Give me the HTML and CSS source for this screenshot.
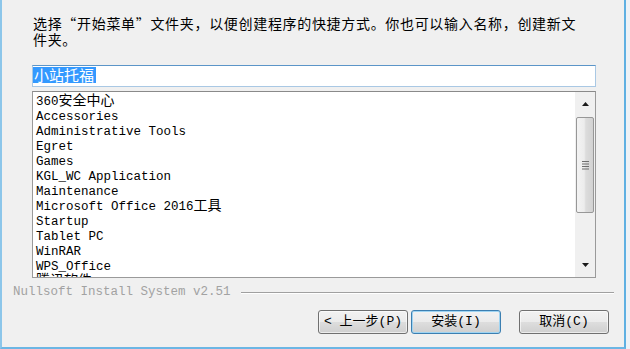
FILE: index.html
```html
<!DOCTYPE html>
<html lang="zh-CN">
<head>
<meta charset="utf-8">
<link rel="stylesheet" href="styles.css">
</head>
<body>
<div class="window">
  <div class="page">
    <p class="intro">选择“开始菜单”文件夹，以便创建程序的快捷方式。你也可以输入名称，创建新文件夹。</p>
    <div class="input"><span class="sel">小站托福</span></div>
    <div class="listbox">
      <div class="items">
        <div class="row">360<span class="cjk">安全中心</span></div>
        <div class="row">Accessories</div>
        <div class="row">Administrative Tools</div>
        <div class="row">Egret</div>
        <div class="row">Games</div>
        <div class="row">KGL_WC Application</div>
        <div class="row">Maintenance</div>
        <div class="row">Microsoft Office 2016<span class="cjk">工具</span></div>
        <div class="row">Startup</div>
        <div class="row">Tablet PC</div>
        <div class="row">WinRAR</div>
        <div class="row">WPS_Office</div>
        <div class="row"><span class="cjk">腾讯软件</span></div>
      </div>
      <div class="scrollbar">
        <div class="sb-btn">
          <svg width="7" height="4" viewBox="0 0 7 4"><polygon points="3.5,0 7,4 0,4" fill="#1a1a1a"/></svg>
        </div>
        <div class="thumb">
          <svg width="7" height="9" viewBox="0 0 7 9"><g fill="#6e6e6e"><rect x="0" y="0" width="7" height="1"/><rect x="0" y="2.5" width="7" height="1"/><rect x="0" y="5" width="7" height="1"/><rect x="0" y="7.5" width="7" height="1"/></g></svg>
        </div>
        <div class="sb-track"></div>
        <div class="sb-btn">
          <svg width="7" height="4" viewBox="0 0 7 4"><polygon points="0,0 7,0 3.5,4" fill="#1a1a1a"/></svg>
        </div>
      </div>
    </div>
  </div>
  <div class="brand">
    <span class="brand-text">Nullsoft Install System v2.51</span>
    <span class="etch"></span>
  </div>
  <div class="buttons">
    <button class="btn">&lt; 上一步(P)</button>
    <button class="btn btn-default">安装(I)</button>
    <button class="btn btn-cancel">取消(C)</button>
  </div>
</div>
</body>
</html>
```
FILE: styles.css
```css
html, body {
  margin: 0;
  padding: 0;
}
body {
  width: 630px;
  height: 349px;
  background: #eef2f6;
  overflow: hidden;
}
.window {
  box-sizing: border-box;
  width: 626px;
  height: 349px;
  background: #f0f0f0;
  border-left: 2px solid #8cc6ea;
  border-right: 2px solid #5fb0e2;
  border-bottom: 2px solid #6cb6e4;
  display: flex;
  flex-direction: column;
}
.page {
  padding: 0 28px 0 30px;
}
.intro {
  margin: 15px 0 0 1px;
  width: 556px;
  font-family: "Noto Sans CJK SC", sans-serif;
  font-size: 14px;
  letter-spacing: 0.68px;
  line-height: 16px;
  color: #000;
}
.input {
  box-sizing: border-box;
  margin-top: 18px;
  height: 22px;
  background: #fff;
  border: 1px solid #a9c8e4;
  border-top-color: #5b95c8;
  padding: 1px 0 0 0;
  display: flex;
  align-items: flex-start;
}
.sel {
  background: #3399ff;
  color: #fff;
  font-family: "Noto Sans CJK SC", sans-serif;
  font-size: 15px;
  line-height: 16px;
  padding: 0 2px 0 1px;
}
.listbox {
  box-sizing: border-box;
  margin-top: 4px;
  height: 187px;
  background: #fff;
  border: 1px solid #9a9a9a;
  border-top-color: #8a8a8a;
  display: flex;
}
.items {
  flex: 1;
  padding: 3px 0 0 3px;
  overflow: hidden;
  font-family: "Liberation Mono", "Noto Sans CJK SC", monospace;
  font-size: 12.5px;
  color: #000;
}
.row {
  height: 15px;
  line-height: 15px;
  white-space: nowrap;
}
.cjk {
  font-family: "Noto Sans CJK SC", sans-serif;
  font-size: 14px;
  line-height: 0;
}
.scrollbar {
  width: 20px;
  background: #f0f0f0;
  display: flex;
  flex-direction: column;
}
.sb-btn {
  height: 24px;
  display: flex;
  align-items: center;
  justify-content: center;
}
.thumb {
  box-sizing: border-box;
  margin: 1px 1px 0 1px;
  height: 96px;
  border: 1px solid #979797;
  border-radius: 2px;
  background: linear-gradient(to right, #f3f3f3 0%, #ececec 45%, #dcdcdc 55%, #d2d2d2 100%);
  display: flex;
  align-items: center;
  justify-content: center;
}
.sb-track {
  flex: 1;
}
.brand {
  margin-top: 7px;
  padding: 0 10px 0 11px;
  height: 14px;
  display: flex;
  align-items: center;
}
.brand-text {
  font-family: "Liberation Mono", monospace;
  font-size: 12.5px;
  line-height: 14px;
  color: #a2a2a2;
  white-space: nowrap;
}
.etch {
  flex: 1;
  margin-left: 10px;
  margin-top: 2px;
  border-top: 1px solid #a0a0a0;
  border-bottom: 1px solid #ffffff;
}
.buttons {
  margin-top: 11px;
  padding-right: 15px;
  display: flex;
  justify-content: flex-end;
  gap: 3px;
}
.btn {
  box-sizing: border-box;
  width: 90px;
  height: 24px;
  padding: 0;
  margin: 0;
  border: 1px solid #707070;
  border-radius: 3px;
  background: linear-gradient(#f2f2f2 0%, #ebebeb 48%, #dddddd 52%, #cfcfcf 100%);
  font-family: "Liberation Mono", "Noto Sans CJK SC", monospace;
  font-size: 13px;
  line-height: 20px;
  color: #000;
  box-shadow: inset 0 0 0 1px rgba(255, 255, 255, 0.6);
}
.btn-default {
  border-color: #3c7fb1;
  box-shadow: inset 0 0 0 1px #9fd4f2;
}
.btn-cancel {
  margin-left: 15px;
}
```
